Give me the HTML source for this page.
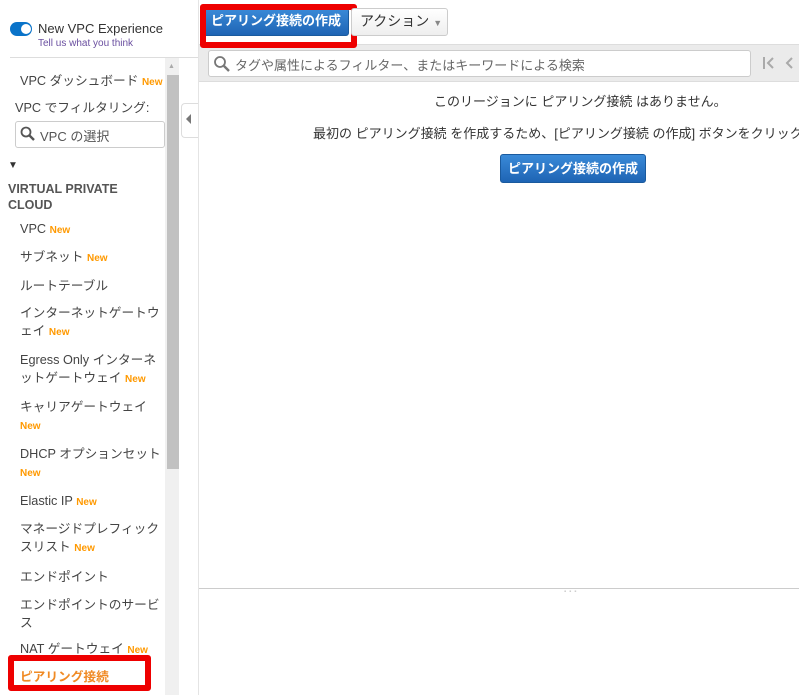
<!DOCTYPE html>
<html><head><meta charset="utf-8"><style>
*{margin:0;padding:0;box-sizing:border-box}
html,body{width:799px;height:695px;overflow:hidden}
body{background:#fff;font-family:"Liberation Sans","Noto Sans CJK JP",sans-serif;color:#444;position:relative}
.a{position:absolute;white-space:nowrap}
.it{position:absolute;left:20px;font-size:12.7px;color:#444;line-height:18px;white-space:nowrap}
.new{color:#f90;font-weight:bold;font-size:10px}
.btn{background:linear-gradient(#3a8ad8,#1e64b4);color:#fff;font-weight:bold;font-size:13px;border-radius:3px;border:1px solid #1a5a9e;text-align:center}
#main{position:absolute;left:0;top:0;width:799px;height:695px;overflow:hidden}
</style></head><body>
<div class="a" style="left:10px;top:22px;width:22px;height:14px;border-radius:7px;background:#0a73c9"></div>
<div class="a" style="left:21px;top:24px;width:10px;height:10px;border-radius:5px;background:#fff"></div>
<div class="a" style="left:38px;top:21px;font-size:13px;color:#333">New VPC Experience</div>
<div class="a" style="left:38px;top:38px;font-size:10px;color:#6a4fa0">Tell us what you think</div>
<div class="a" style="left:10px;top:57px;width:189px;height:1px;background:#ddd"></div>
<div class="a" style="left:165px;top:58px;width:14px;height:637px;background:#f0f0f0"></div>
<div class="a" style="left:167px;top:75px;width:12px;height:394px;background:#c1c1c1"></div>
<div class="a" style="left:168px;top:63px;font-size:7px;color:#aaa">▲</div>
<div class="a" style="left:181px;top:103px;width:18px;height:35px;border:1px solid #ddd;border-right:none;border-radius:4px 0 0 4px;background:#fff"></div>
<div class="a" style="left:186px;top:114px;width:0;height:0;border-top:5px solid transparent;border-bottom:5px solid transparent;border-right:5px solid #777"></div>
<div class="it" style="top:72px">VPC ダッシュボード <span class="new">New</span></div>
<div class="it" style="left:15px;top:99px">VPC でフィルタリング:</div>
<div class="a" style="left:15px;top:121px;width:150px;height:27px;border:1px solid #ccc;border-radius:3px"></div>
<svg class="a" style="left:20px;top:126px" width="16" height="16"><circle cx="6" cy="6" r="4.5" fill="none" stroke="#555" stroke-width="1.8"/><line x1="9.5" y1="9.5" x2="14" y2="14" stroke="#555" stroke-width="2.4"/></svg>
<div class="a" style="left:40px;top:126px;font-size:13px;color:#555">VPC の選択</div>
<div class="a" style="left:8px;top:160px;font-size:10px;color:#333">▼</div>
<div class="a" style="left:8px;top:181px;font-size:12.5px;font-weight:bold;color:#555;line-height:16px">VIRTUAL PRIVATE<br>CLOUD</div>
<div class="it" style="top:220px">VPC <span class="new">New</span></div>
<div class="it" style="top:248px">サブネット <span class="new">New</span></div>
<div class="it" style="top:277px">ルートテーブル</div>
<div class="it" style="top:304px">インターネットゲートウ<br>ェイ <span class="new">New</span></div>
<div class="it" style="top:351px">Egress Only インターネ<br>ットゲートウェイ <span class="new">New</span></div>
<div class="it" style="top:398px">キャリアゲートウェイ<br><span class="new">New</span></div>
<div class="it" style="top:445px">DHCP オプションセット<br><span class="new">New</span></div>
<div class="it" style="top:492px">Elastic IP <span class="new">New</span></div>
<div class="it" style="top:520px">マネージドプレフィック<br>スリスト <span class="new">New</span></div>
<div class="it" style="top:568px">エンドポイント</div>
<div class="it" style="top:596px">エンドポイントのサービ<br>ス</div>
<div class="it" style="top:640px">NAT ゲートウェイ <span class="new">New</span></div>
<div class="it" style="top:668px;color:#f08a24;font-weight:bold">ピアリング接続</div>
<div class="a" style="left:8px;top:655px;width:143px;height:36px;border:6px solid #e00;border-radius:3px"></div>
<div id="main">
<div class="a" style="left:198px;top:0;width:1px;height:695px;background:#e4e4e4"></div>
<div class="a" style="left:199px;top:44px;width:600px;height:38px;background:#ebebeb;border-top:1px solid #ddd;border-bottom:1px solid #ddd"></div>
<div class="a btn" style="left:203px;top:8px;width:146px;height:28px;line-height:24px">ピアリング接続の作成</div>
<div class="a" style="left:200px;top:4px;width:157px;height:44px;border:6px solid #e00;border-radius:3px"></div>
<div class="a" style="left:351px;top:8px;width:97px;height:28px;border:1px solid #ccc;border-radius:3px;background:linear-gradient(#fff,#eee);font-size:14px;color:#333;line-height:24px;padding-left:8px">アクション <span style="font-size:9px;color:#888">▼</span></div>
<div class="a" style="left:208px;top:50px;width:543px;height:27px;border:1px solid #ccc;border-radius:3px;background:#fff"></div>
<svg class="a" style="left:213px;top:55px" width="18" height="18"><circle cx="7" cy="7" r="5" fill="none" stroke="#777" stroke-width="1.8"/><line x1="11" y1="11" x2="16" y2="16" stroke="#777" stroke-width="2.4"/></svg>
<div class="a" style="left:235px;top:55px;font-size:13px;color:#666">タグや属性によるフィルター、またはキーワードによる検索</div>
<svg class="a" style="left:762px;top:56px" width="37" height="14"><path d="M2 1v12M11 2l-5 5 5 5M30 2l-5 5 5 5" fill="none" stroke="#aaa" stroke-width="2"/></svg>
<div class="a" style="left:434px;top:91px;font-size:13px;color:#333">このリージョンに ピアリング接続 はありません。</div>
<div class="a" style="left:313px;top:123px;font-size:13px;color:#333">最初の ピアリング接続 を作成するため、[ピアリング接続 の作成] ボタンをクリックしてください。</div>
<div class="a btn" style="left:500px;top:154px;width:146px;height:29px;line-height:27px">ピアリング接続の作成</div>
<div class="a" style="left:199px;top:588px;width:600px;height:1px;background:#ccc"></div>
<div class="a" style="left:564px;top:589px;font-size:6px;color:#ccc;letter-spacing:3px">▪▪▪</div>
</div>
</body></html>
